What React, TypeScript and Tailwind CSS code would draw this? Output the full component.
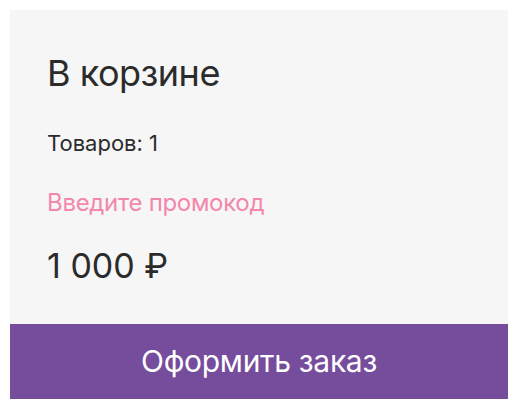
export default function App() {
  return (
    <div className="w-[518px] h-[408px] bg-white p-[10px]" style={{ fontFamily: "Inter, 'Noto Sans', sans-serif" }}>
      <div className="bg-[#f6f6f6] flex flex-col">
        <div className="px-[37px] pt-[43px] pb-[38px] flex flex-col text-[#2b2b2b]">
          <h1 className="text-[36px] leading-[40px] tracking-[-0.5px]">В корзине</h1>
          <div className="mt-[36px] text-[22px] leading-[28px]">Товаров: 1</div>
          <div className="mt-[32px] text-[24px] leading-[28px] text-[#f387ad] tracking-[-0.3px]">Введите промокод</div>
          <div className="mt-[29px] text-[34px] leading-[40px]">1 000 ₽</div>
        </div>
        <button className="h-[75px] bg-[#764c9c] text-white text-[30px] tracking-[-0.3px] flex items-center justify-center">Оформить заказ</button>
      </div>
    </div>
  );
}
